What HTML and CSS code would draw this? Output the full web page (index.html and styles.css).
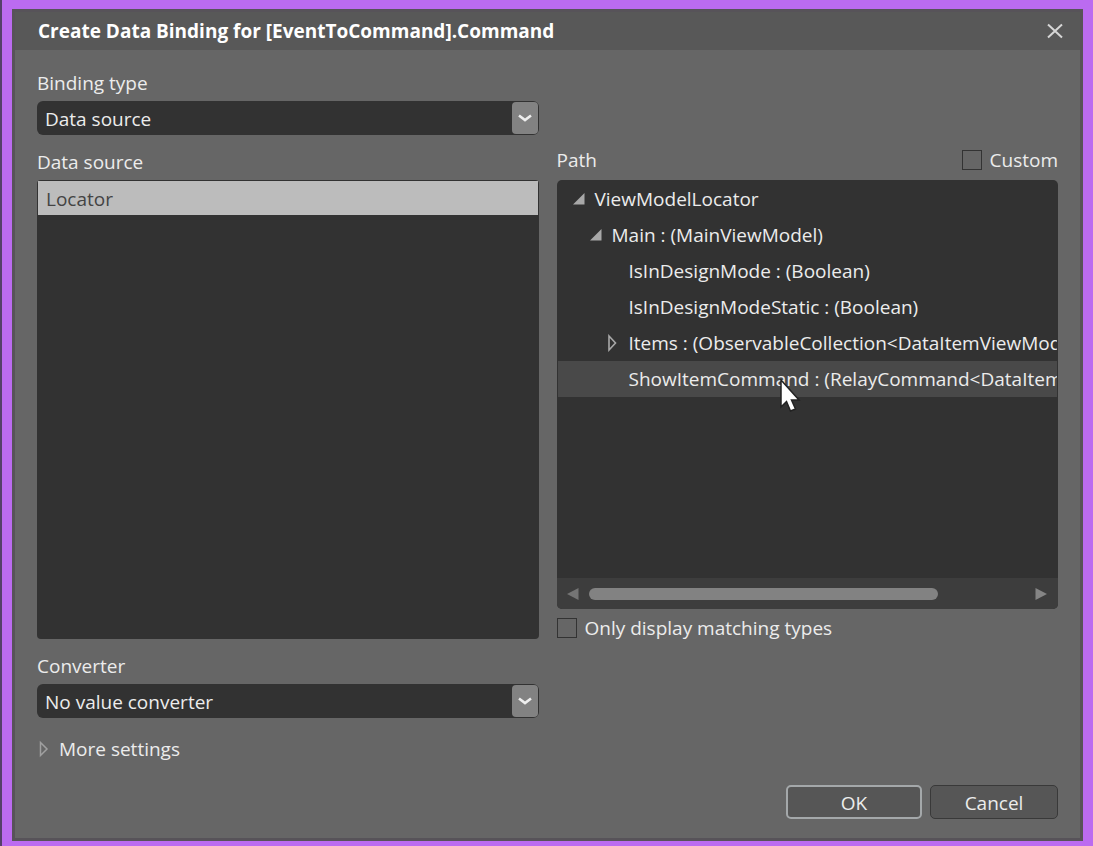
FILE: index.html
```html
<!DOCTYPE html>
<html lang="en">
<head>
<meta charset="utf-8">
<title>Create Data Binding</title>
<link rel="stylesheet" href="styles.css">
</head>
<body>
<main class="dialog">
  <header class="titlebar">
    <h1 class="title">Create Data Binding for [EventToCommand].Command</h1>
    <button class="close" type="button" aria-label="Close">
      <svg width="18" height="16" viewBox="0 0 18 16"><path d="M2 1.500L16 14.500M16 1.500L2 14.500" fill="none" stroke="#d6d6d6" stroke-width="2"/></svg>
    </button>
  </header>
  <form class="content">
    <div class="fields">
      <div class="field">
        <label class="label" for="binding-type">Binding type</label>
        <div class="combo">
          <select id="binding-type" class="combo-select"><option>Data source</option></select>
          <span class="combo-button"><svg width="14" height="9" viewBox="0 0 14 9"><path d="M1 1.500L7 6L13 1.500" fill="none" stroke="#eee" stroke-width="2.600"/></svg></span>
        </div>
      </div>
      <div class="field source">
        <span class="label" id="source-label">Data source</span>
        <ul class="list" role="listbox" aria-labelledby="source-label">
          <li class="list-item" role="option" aria-selected="true">Locator</li>
        </ul>
      </div>
      <div class="path">
        <div class="path-head">
          <span id="path-label">Path</span>
          <label class="check"><input class="box" type="checkbox">Custom</label>
        </div>
        <div class="tree-panel">
          <ul class="tree" role="tree" aria-labelledby="path-label">
            <li class="node level-1" role="treeitem"><svg class="glyph" width="12" height="12" viewBox="0 0 12 12"><path d="M11.500 0V11.500H0Z" fill="#a8a8a8"/></svg>ViewModelLocator</li>
            <li class="node level-2" role="treeitem"><svg class="glyph" width="12" height="12" viewBox="0 0 12 12"><path d="M11.500 0V11.500H0Z" fill="#a8a8a8"/></svg>Main : (MainViewModel)</li>
            <li class="node level-3" role="treeitem"><span class="glyph"></span>IsInDesignMode : (Boolean)</li>
            <li class="node level-3" role="treeitem"><span class="glyph"></span>IsInDesignModeStatic : (Boolean)</li>
            <li class="node level-3" role="treeitem"><svg class="glyph" width="12" height="18" viewBox="0 0 12 18"><path d="M2 2L8.500 9L2 16Z" fill="none" stroke="#a8a8a8" stroke-width="1.600"/></svg>Items : (ObservableCollection&lt;DataItemViewModel&gt;)</li>
            <li class="node level-3 selected" role="treeitem" aria-selected="true"><span class="glyph"></span>ShowItemCommand : (RelayCommand&lt;DataItemViewModel&gt;)</li>
          </ul>
          <svg class="pointer" width="22" height="34" viewBox="0 0 22 34"><path d="M2 1V28L7.500 22.500L11.500 32L16.500 30L12.500 21H20Z" fill="#fff" stroke="#222" stroke-width="1.500"/></svg>
          <div class="scrollbar">
            <svg width="12" height="12" viewBox="0 0 12 12"><path d="M11.500 0V12L0 6Z" fill="#747474"/></svg>
            <div class="track"><div class="thumb"></div></div>
            <svg width="12" height="12" viewBox="0 0 12 12"><path d="M.5 0V12L12 6Z" fill="#858585"/></svg>
          </div>
        </div>
        <label class="check"><input class="box" type="checkbox">Only display matching types</label>
      </div>
      <div class="field">
        <label class="label" for="converter">Converter</label>
        <div class="combo">
          <select id="converter" class="combo-select"><option>No value converter</option></select>
          <span class="combo-button"><svg width="14" height="9" viewBox="0 0 14 9"><path d="M1 1.500L7 6L13 1.500" fill="none" stroke="#eee" stroke-width="2.600"/></svg></span>
        </div>
      </div>
    </div>
    <button class="more" type="button"><svg width="12" height="18" viewBox="0 0 12 18"><path d="M3.500 2.500L10 9L3.500 15.500Z" fill="none" stroke="#a0a0a0" stroke-width="1.500"/></svg>More settings</button>
    <footer class="actions">
      <button class="action primary" type="button">OK</button>
      <button class="action" type="button">Cancel</button>
    </footer>
  </form>
</main>
</body>
</html>
```
FILE: styles.css
```css
* { box-sizing: border-box; }

body {
  display: flex;
  min-height: 100vh;
  margin: 0;
  padding: 9px 10px 5px;
  border-left: 2px solid #54406a;
  background: #bb6bf0;
  color: #ececec;
  font: 19px/24px "Open Sans", "Noto Sans", sans-serif;
}

button, select, input { margin: 0; color: inherit; font: inherit; }
ul { margin: 0; padding: 0; list-style: none; }
svg { display: block; flex: none; }

.dialog {
  display: flex;
  flex: 1;
  flex-direction: column;
  min-width: 0;
  border: 3px solid #575359;
  background: #666;
}

.titlebar {
  display: flex;
  align-items: center;
  justify-content: space-between;
  height: 38px;
  padding: 0 14px 0 23px;
  background: #585858;
}

.title { margin: 0; font-size: 19px; line-height: 24px; font-weight: 700; color: #fff; }
.close { padding: 2px; border: 0; background: none; }

.content {
  display: flex;
  flex: 1;
  flex-direction: column;
  padding: 21px 22px 19px;
}

.fields {
  display: grid;
  flex: 1;
  grid-template-columns: minmax(0, 1fr) minmax(0, 1fr);
  grid-template-rows: auto 1fr auto;
  gap: 15px 18px;
}

.field { display: flex; flex-direction: column; grid-column: 1; gap: 6px; }

.combo {
  display: grid;
  grid-template-columns: 1fr 26px;
  height: 34px;
  padding: 1px;
  border-radius: 6px;
  background: #323232;
}

.combo-select {
  grid-area: 1 / 1 / 2 / 3;
  padding: 2px 32px 0 7px;
  border: 0;
  appearance: none;
  background: none;
}

.combo-button {
  display: flex;
  grid-area: 1 / 2;
  align-items: center;
  justify-content: center;
  border-radius: 4px;
  background: #828282;
  pointer-events: none;
}

.list {
  flex: 1;
  padding: 1px;
  border-radius: 4px;
  background: #323232;
}

.list-item {
  height: 34px;
  padding: 0 8px;
  background: #bcbcbc;
  color: #444;
  line-height: 36px;
}

.path { display: flex; flex-direction: column; grid-area: 2 / 2; }

.path-head {
  display: flex;
  align-items: center;
  justify-content: space-between;
  height: 20px;
  margin-bottom: 10px;
}

.check { display: flex; align-items: center; align-self: flex-start; gap: 8px; line-height: 22px; }
.path-head .check { align-self: center; }

.box {
  width: 20px;
  height: 20px;
  border: 1px solid #333;
  appearance: none;
}

.tree-panel {
  position: relative;
  display: flex;
  flex: 1;
  flex-direction: column;
  margin-bottom: 8px;
  border-radius: 5px;
  background: #323232;
  overflow: hidden;
}

.tree { flex: 1; padding: 1px; overflow: hidden; }

.node {
  display: flex;
  align-items: center;
  gap: 10px;
  height: 36px;
  overflow: hidden;
  white-space: nowrap;
}

.glyph { flex: none; width: 12px; }
.level-1 { padding-left: 15px; }
.level-2 { padding-left: 32px; }
.level-3 { padding-left: 49px; }
.selected { background: #494949; }

.pointer { position: absolute; top: 199px; left: 222px; }

.scrollbar {
  display: flex;
  align-items: center;
  gap: 10px;
  height: 31px;
  padding: 0 11px 0 10px;
  background: #3d3d3d;
}

.track { flex: 1; }
.thumb { width: 80%; height: 12px; border-radius: 6px; background: #828282; }

.more {
  display: flex;
  align-items: center;
  align-self: flex-start;
  gap: 10px;
  margin-top: 19px;
  padding: 0;
  border: 0;
  background: none;
}

.actions { display: flex; justify-content: flex-end; gap: 8px; margin-top: 24px; }

.action {
  width: 128px;
  height: 34px;
  padding: 2px 0 0;
  border: 1px solid #393939;
  border-radius: 5px;
  background: #565656;
}

.primary { width: 136px; border: 2px solid #a4a8aa; }
```
